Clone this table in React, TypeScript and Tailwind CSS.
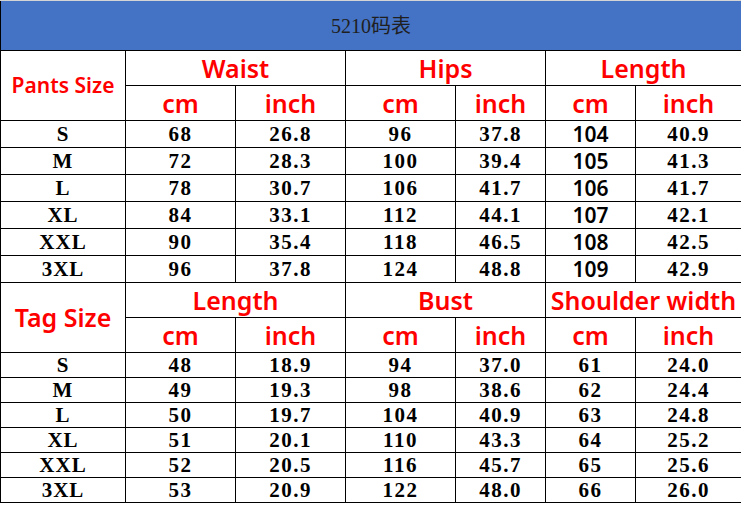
import React from 'react';

const serif = "font-['Liberation_Serif','Noto_Sans_CJK_SC',serif]";
const sans = "font-['Noto_Sans','Noto_Sans_CJK_SC',sans-serif]";

type Row = { size: string; vals: string[] };

const PANTS: Row[] = [
  { size: 'S', vals: ['68', '26.8', '96', '37.8', '104', '40.9'] },
  { size: 'M', vals: ['72', '28.3', '100', '39.4', '105', '41.3'] },
  { size: 'L', vals: ['78', '30.7', '106', '41.7', '106', '41.7'] },
  { size: 'XL', vals: ['84', '33.1', '112', '44.1', '107', '42.1'] },
  { size: 'XXL', vals: ['90', '35.4', '118', '46.5', '108', '42.5'] },
  { size: '3XL', vals: ['96', '37.8', '124', '48.8', '109', '42.9'] },
];

const TAGS: Row[] = [
  { size: 'S', vals: ['48', '18.9', '94', '37.0', '61', '24.0'] },
  { size: 'M', vals: ['49', '19.3', '98', '38.6', '62', '24.4'] },
  { size: 'L', vals: ['50', '19.7', '104', '40.9', '63', '24.8'] },
  { size: 'XL', vals: ['51', '20.1', '110', '43.3', '64', '25.2'] },
  { size: 'XXL', vals: ['52', '20.5', '116', '45.7', '65', '25.6'] },
  { size: '3XL', vals: ['53', '20.9', '122', '48.0', '66', '26.0'] },
];

const cell = 'bg-white flex items-center justify-center leading-none';
const red = `${cell} ${sans} text-[#ff0000] font-semibold`;

function Header({ label, labelSize, groups }: { label: string; labelSize: string; groups: string[] }) {
  return (
    <>
      <div className={`${red} row-span-2 ${labelSize}`}>{label}</div>
      {groups.map((g) => (
        <div key={g} className={`${red} col-span-2 text-[25px] whitespace-nowrap`}>{g}</div>
      ))}
      {groups.map((g) => (
        <React.Fragment key={g + '-u'}>
          <div className={`${red} text-[25px]`}>cm</div>
          <div className={`${red} text-[25px]`}>inch</div>
        </React.Fragment>
      ))}
    </>
  );
}

function DataRows({ rows, sansCol }: { rows: Row[]; sansCol?: number }) {
  return (
    <>
      {rows.map((r) => (
        <React.Fragment key={r.size}>
          <div className={`${cell} ${serif} font-bold text-[21px] text-black tracking-[1px]`}>{r.size}</div>
          {r.vals.map((v, i) => (
            <div
              key={i}
              className={
                i === sansCol
                  ? `${cell} ${sans} font-semibold text-[21px] text-black`
                  : `${cell} ${serif} font-bold text-[21px] text-black tracking-[1.5px]`
              }
            >
              {v}
            </div>
          ))}
        </React.Fragment>
      ))}
    </>
  );
}

export default function App() {
  return (
    <div className="w-[741px] h-[505px] bg-white overflow-hidden">
      <div className="border-t border-[#d4d4d4]">
        <div className={`h-[49px] bg-[#4472c4] border-l border-black flex items-center justify-center ${serif} text-[20px] text-[#1f1f1f]`}>
          5210码表
        </div>
      </div>
      <div className="bg-black pl-px py-px grid grid-cols-[124px_109px_109px_109px_89px_89px_1fr] grid-rows-[34px_34px_26px_26px_26px_26px_26px_26px_34px_34px_24px_24px_24px_24px_24px_24px] gap-px">
        <Header label="Pants Size" labelSize="text-[21px]" groups={['Waist', 'Hips', 'Length']} />
        <DataRows rows={PANTS} sansCol={4} />
        <Header label="Tag Size" labelSize="text-[25px]" groups={['Length', 'Bust', 'Shoulder width']} />
        <DataRows rows={TAGS} />
      </div>
    </div>
  );
}
